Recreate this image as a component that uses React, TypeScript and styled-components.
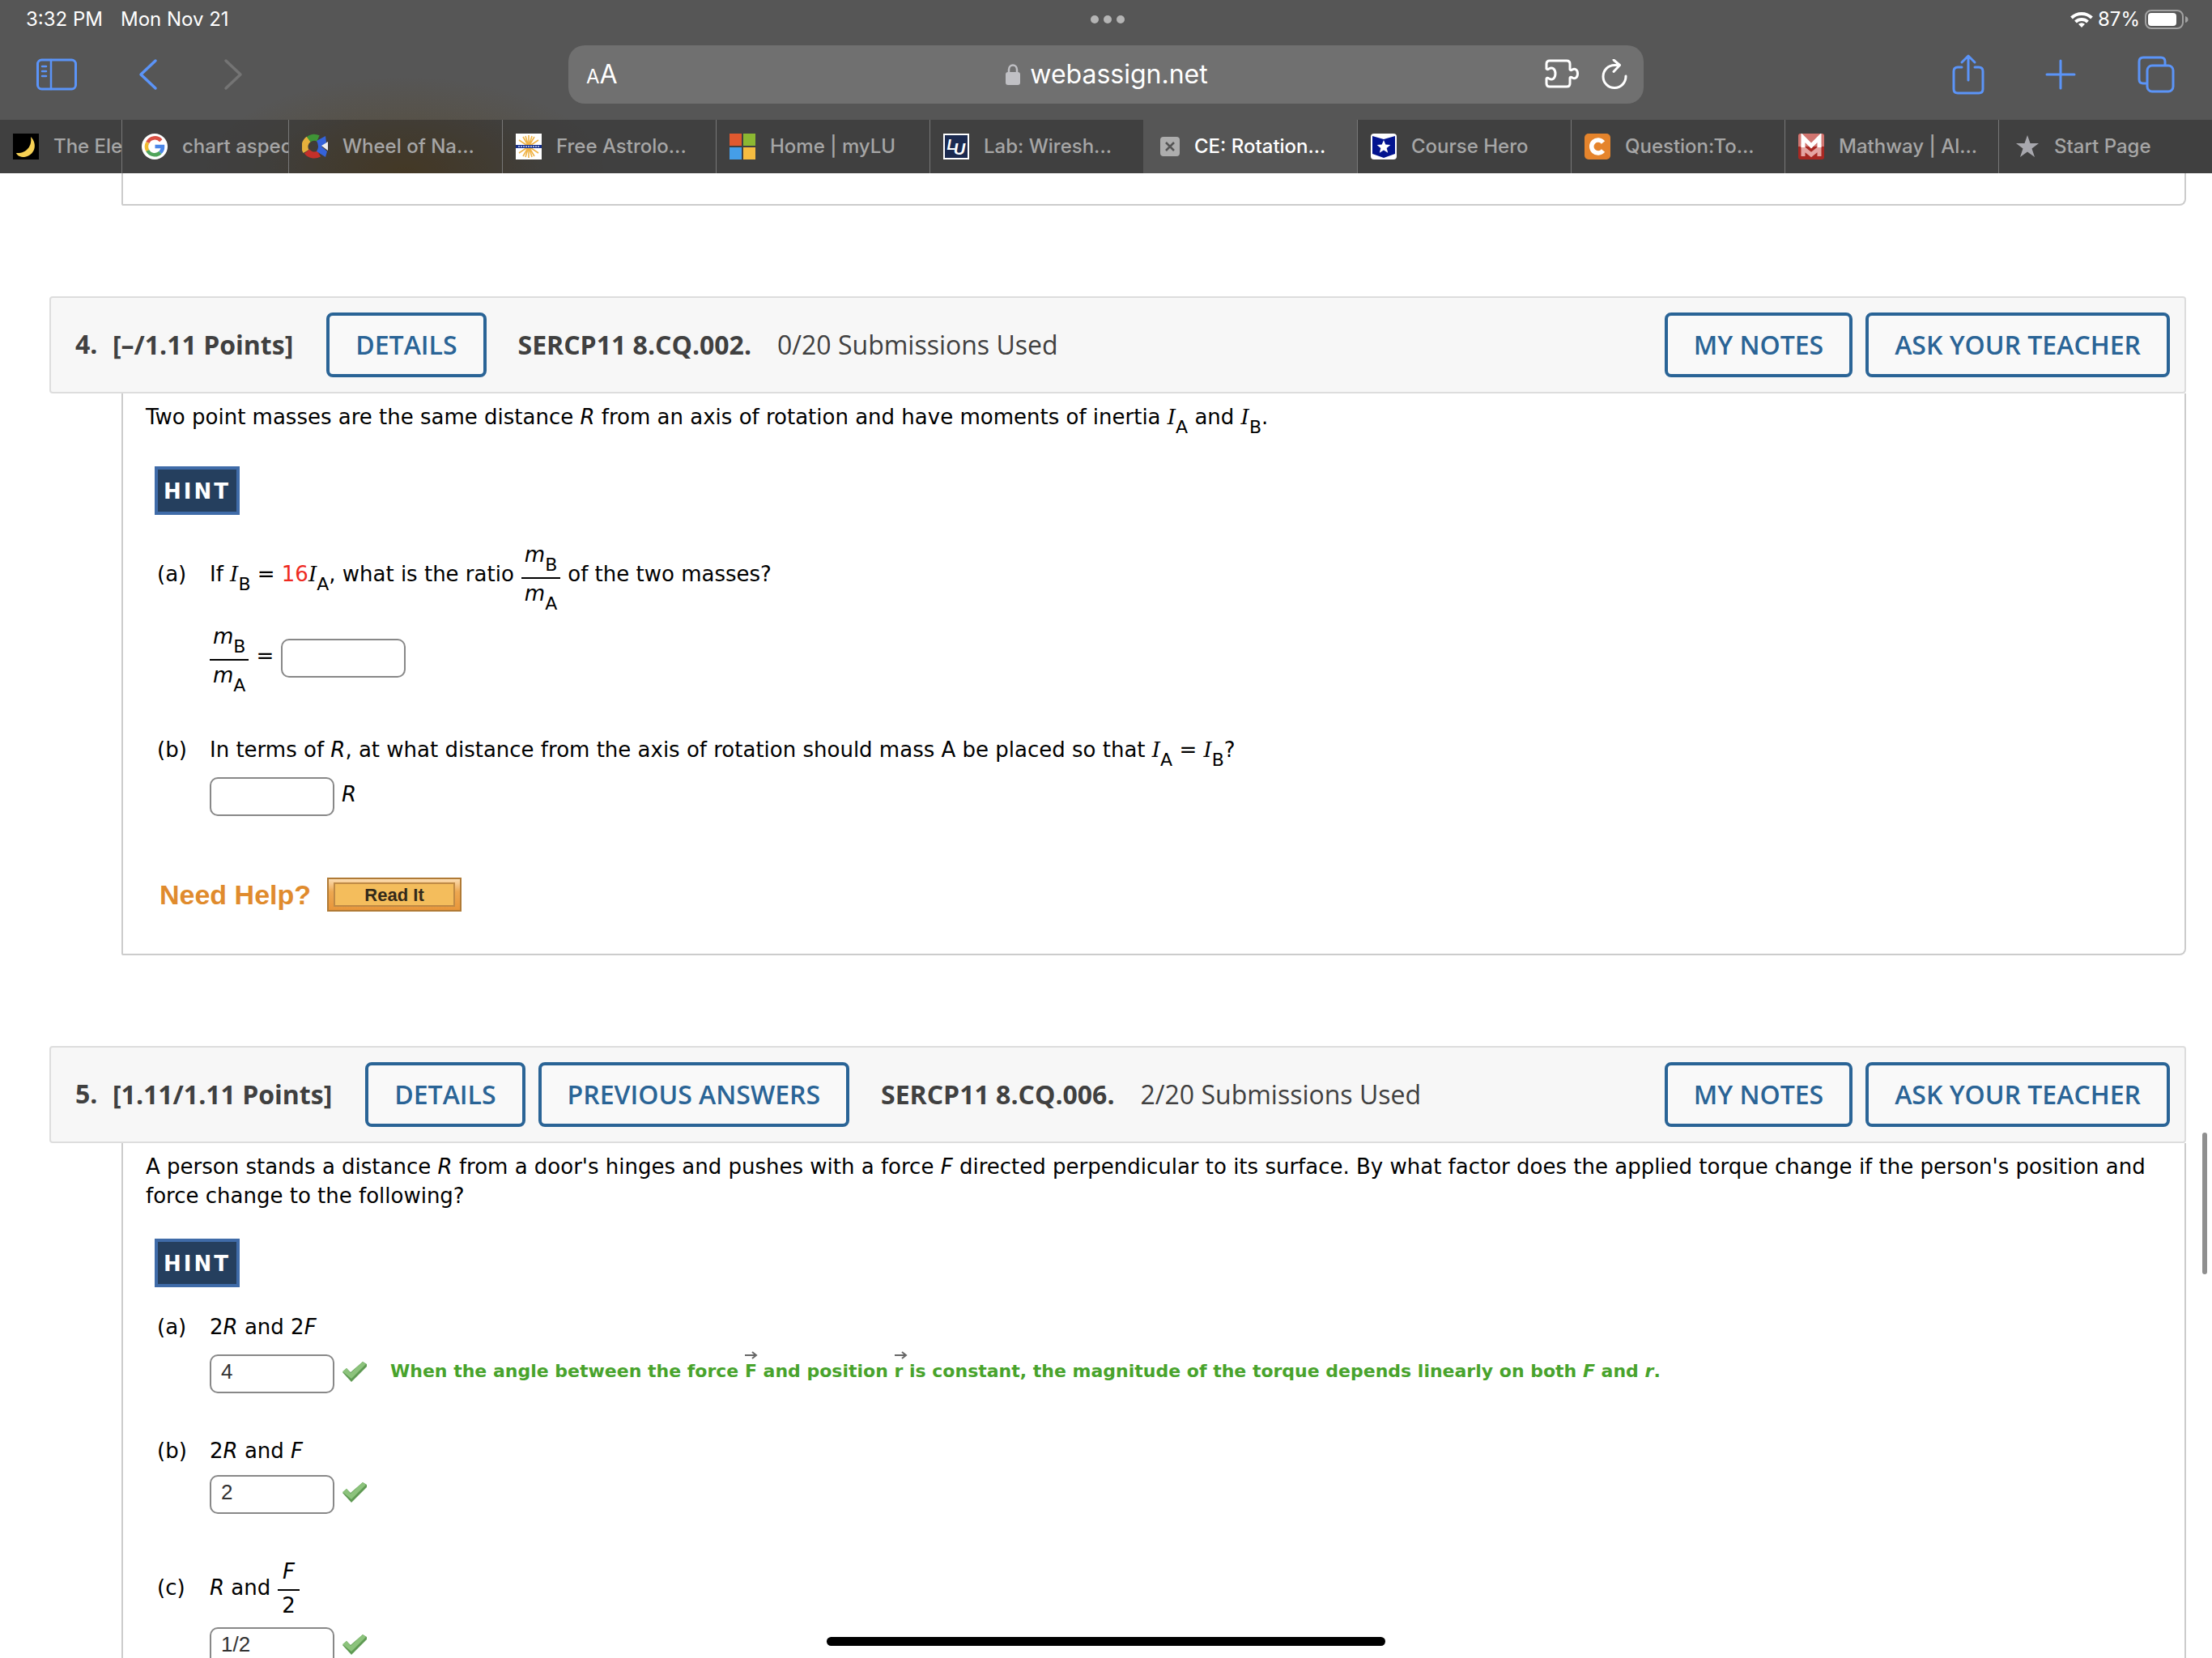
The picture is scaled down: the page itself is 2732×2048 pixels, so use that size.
import React from "react";
import styled, { createGlobalStyle, css } from "styled-components";

const GlobalStyle = createGlobalStyle`
  *, *::before, *::after { box-sizing: border-box; }
  body { margin: 0; background: #fff; }
  button, input { font: inherit; margin: 0; }
`;

const uiFont = css`font-family: Inter, "Liberation Sans", sans-serif;`;
const headFont = css`font-family: "Open Sans", "Noto Sans", sans-serif;`;
const bodyFont = css`font-family: Verdana, "DejaVu Sans", sans-serif;`;

/* ---------- Browser chrome ---------- */

const Screen = styled.div`
  position: relative;
  height: 100vh;
  display: flex;
  flex-direction: column;
  overflow: hidden;
`;

const Chrome = styled.header`
  ${uiFont}
  flex: none;
  color: #fff;
  background:
    radial-gradient(ellipse 250px 120px at 500px 214px, rgba(88, 58, 0, 0.35), rgba(88, 58, 0, 0) 100%),
    #565656;
`;

const StatusBar = styled.div`
  display: grid;
  grid-template-columns: 1fr auto 1fr;
  align-items: center;
  height: 48px;
  padding: 0 29px 0 32px;
  font-size: 24px;
  line-height: 30px;
`;

const Clock = styled.div`
  display: flex;
  gap: 22px;
`;

const Dots = styled.div`
  display: flex;
  gap: 6px;
`;

const Dot = styled.span`
  width: 10px;
  height: 10px;
  border-radius: 50%;
  background: #b4b4b4;
`;

const Power = styled.div`
  display: flex;
  justify-content: flex-end;
  align-items: center;
  gap: 6px;
`;

const Toolbar = styled.div`
  display: grid;
  grid-template-columns: 1fr minmax(0, 1328px) 1fr;
  align-items: center;
  height: 100px;
  padding: 8px 40px 20px;
`;

const ToolGroup = styled.div<{ $end?: boolean }>`
  display: flex;
  align-items: center;
  gap: ${(p) => (p.$end ? "74px" : "60px")};
  padding-right: ${(p) => (p.$end ? "4px" : "0")};
  justify-content: ${(p) => (p.$end ? "flex-end" : "flex-start")};
`;

const IconButton = styled.button<{ $dim?: boolean }>`
  display: flex;
  padding: 0;
  border: 0;
  background: none;
  color: ${(p) => (p.$dim ? "#747474" : "#5b94f8")};
`;

const AddressBar = styled.div`
  display: grid;
  grid-template-columns: 1fr auto 1fr;
  align-items: center;
  height: 72px;
  padding: 0 20px 0 22px;
  border-radius: 20px;
  background: #707070;
`;

const TextSize = styled.button`
  justify-self: start;
  padding: 2px 0 0;
  border: 0;
  background: none;
  color: #fff;
  font-size: 32px;
  line-height: 40px;
`;

const SmallA = styled.span`
  font-size: 24px;
`;

const Address = styled.div`
  display: flex;
  align-items: center;
  gap: 12px;
  font-size: 32px;
  line-height: 40px;
`;

const AddressTools = styled.div`
  display: flex;
  justify-content: flex-end;
  gap: 28px;
  button { color: #fff; }
`;

const TabStrip = styled.nav`
  display: grid;
  grid-template-columns: 150px 206px repeat(9, minmax(0, 1fr));
  height: 66px;
  background: radial-gradient(ellipse 170px 90px at 500px 66px, rgba(100, 62, 0, 0.6), rgba(100, 62, 0, 0) 100%);
`;

const TabItem = styled.a<{ $active?: boolean; $inset?: number }>`
  display: flex;
  align-items: center;
  gap: 18px;
  padding-left: ${(p) => p.$inset ?? 16}px;
  overflow: hidden;
  border-left: 1px solid ${(p) => (p.$active ? "transparent" : "#777")};
  color: ${(p) => (p.$active ? "#fff" : "#a6a6a6")};
  background: ${(p) => (p.$active ? "transparent" : "rgba(48, 48, 48, 0.58)")};
  font-size: 24px;
  font-weight: 500;
  line-height: 30px;
  white-space: nowrap;
  text-decoration: none;
  &:first-child { border-left: 0; }
  svg { flex: none; }
`;

/* ---------- Assignment page ---------- */

const Page = styled.main`
  flex: 1;
  min-height: 0;
  overflow: hidden;
  padding: 0 32px 0 61px;
`;

const Card = styled.div`
  ${bodyFont}
  margin: 0 0 112px 89px;
  padding: 11px 28px 52px;
  border: 2px solid #ccc;
  border-top: 0;
  border-radius: 0 0 8px 2px;
  color: #000;
  font-size: 26px;
  line-height: 36px;
`;

const PreviousCard = styled(Card)`
  height: 40px;
  padding: 0;
`;

const QuestionBar = styled.div`
  ${headFont}
  display: flex;
  align-items: center;
  height: 120px;
  padding: 0 18px 0 30px;
  border: 2px solid #ddd;
  border-radius: 4px;
  background: #f7f7f7;
  color: #404040;
  font-size: 32px;
  line-height: 44px;
  white-space: nowrap;
`;

const QuestionNumber = styled.span`
  width: 46px;
  padding-bottom: 3px;
  font-weight: 700;
`;

const Points = styled.strong`
  font-weight: 700;
  margin-right: 41px;
`;

const Source = styled.strong`
  font-weight: 700;
  margin: 0 32px 0 39px;
`;

const ButtonRow = styled.div<{ $end?: boolean }>`
  display: flex;
  gap: 16px;
  margin-left: ${(p) => (p.$end ? "auto" : "0")};
`;

const OutlineButton = styled.button`
  height: 80px;
  padding: 0 32px;
  border: 4px solid #2a6496;
  border-radius: 8px;
  background: #f9f9f9;
  color: #2a6496;
  font-weight: 600;
`;

const Prompt = styled.p<{ $subscripts?: boolean }>`
  margin: 0;
  padding-bottom: ${(p) => (p.$subscripts ? "8px" : "0")};
`;

const HintButton = styled.button`
  display: block;
  height: 60px;
  margin: 35px 0 31px 11px;
  padding: 2px 7px 0;
  border: 4px solid #3f6ba8;
  background: #253f5e;
  color: #fff;
  font-weight: 700;
  letter-spacing: 3px;
`;

const Parts = styled.div<{ $gap: number }>`
  display: flex;
  flex-direction: column;
  gap: ${(p) => p.$gap}px;
  margin-left: 14px;
`;

const PartGrid = styled.section<{ $gap: number }>`
  display: grid;
  grid-template-columns: 65px 1fr;
  align-items: center;
  row-gap: ${(p) => p.$gap}px;
`;

const Line = styled.div`
  display: flex;
  align-items: center;
  gap: 9px;
`;

const Answer = styled(Line)`
  grid-column: 2;
`;

const Sub = styled.sub`
  font-size: 22px;
  font-style: normal;
  line-height: 0;
  vertical-align: -11px;
`;

const Inertia = styled.i`
  font-family: "DejaVu Serif", serif;
  line-height: 0;
`;

const Given = styled.span`
  color: #ee2a1f;
`;

const Fraction = styled.span`
  display: inline-flex;
  flex-direction: column;
  align-items: stretch;
  text-align: center;
`;

const Numerator = styled.span<{ $tight?: boolean }>`
  padding: 0 ${(p) => (p.$tight ? "5px 4px" : "4px 10px")};
  border-bottom: 2px solid #000;
`;

const Denominator = styled.span<{ $tight?: boolean }>`
  padding: 3px ${(p) => (p.$tight ? "5px 0" : "4px 3px")};
  line-height: 30px;
`;

const AnswerBox = styled.input`
  width: 154px;
  height: 48px;
  margin-top: 6px;
  padding: 0 12px 5px;
  border: 2px solid #888;
  border-radius: 10px;
  background: #fff;
  color: #333;
  font-family: "Liberation Sans", Arial, sans-serif;
  font-size: 26px;
`;

const Feedback = styled.strong`
  margin-left: 20px;
  color: #48a32c;
  font-size: 22px;
  line-height: 36px;
  font-weight: 700;
`;

const VectorMark = styled.span`
  position: relative;
  svg { position: absolute; left: 0; top: -12px; }
`;

const Help = styled.div`
  display: flex;
  align-items: center;
  gap: 20px;
  margin: 76px 0 0 17px;
  font-family: "Liberation Sans", Arial, sans-serif;
`;

const HelpLabel = styled.strong`
  color: #e08b2d;
  font-size: 34px;
  line-height: 36px;
`;

const ReadButton = styled.button`
  width: 166px;
  height: 42px;
  padding: 4px 6px;
  border: 2px solid #b07a35;
  background: linear-gradient(#fbdcb0, #eda852 40%, #e8963a);
  color: #33291a;
  font-size: 22px;
  font-weight: 700;
`;

const ReadFace = styled.span`
  display: block;
  height: 30px;
  padding-top: 1px;
  border: 2px solid #bf8a45;
  background: #f4bd5c;
  line-height: 26px;
`;

const HomeIndicator = styled.div`
  position: absolute;
  left: 50%;
  bottom: 15px;
  width: 690px;
  height: 11px;
  transform: translateX(-50%);
  border-radius: 6px;
  background: #000;
`;

const ScrollThumb = styled.div`
  position: absolute;
  right: 6px;
  top: 1399px;
  width: 6px;
  height: 175px;
  border-radius: 3px;
  background: #8f8f8f;
`;

/* ---------- Drawings ---------- */

const line = { fill: "none", stroke: "currentColor", strokeLinecap: "round" as const, strokeLinejoin: "round" as const };

const SidebarIcon = () => (
  <svg width="60" height="44" viewBox="0 0 60 44" {...line} strokeWidth="3">
    <rect x="6.500" y="4" width="47" height="36" rx="5" />
    <path d="M23 4v36M12 12h5M12 18h5M12 24h5" strokeWidth="2.500" />
  </svg>
);

const BackIcon = ({ flip }: { flip?: boolean }) => (
  <svg width="46" height="44" viewBox="0 0 46 44" {...line} strokeWidth="3.500">
    <path d={flip ? "M13 5l18 17-18 17" : "M32 5L14 22l18 17"} />
  </svg>
);

const LockIcon = () => (
  <svg width="18" height="28" viewBox="0 0 18 28">
    <path d="M4 12V8a5 5.500 0 0 1 10 0v4" fill="none" stroke="#c0c0c4" strokeWidth="2.500" />
    <rect x="0" y="11" width="18" height="16" rx="3" fill="#c0c0c4" />
  </svg>
);

const PuzzleIcon = () => (
  <svg width="42" height="36" viewBox="0 0 42 36" {...line} strokeWidth="3">
    <path d="M2 12V6q0-4 4-4h21q4 0 4 4v7q1 1.500 3 0c3-2 6.500 0 6.500 5s-3.500 7-6.500 5q-2-1.500-3 0v7q0 4-4 4H6q-4 0-4-4v-6q1-1.500 3 0c4 2.500 8 0 8-6s-4-8.500-8-6q-2 1.500-3 0z" />
  </svg>
);

const ReloadIcon = () => (
  <svg width="32" height="38" viewBox="0 0 32 38" {...line} strokeWidth="3">
    <path d="M30 21a14 14 0 1 1-14-13.500h6M15 1l7.500 6.500-7.500 8" />
  </svg>
);

const ShareIcon = () => (
  <svg width="42" height="52" viewBox="0 0 42 52" {...line} strokeWidth="3">
    <path d="M13 17H8q-5 0-5 5v22q0 5 5 5h26q5 0 5-5V22q0-5-5-5h-5M21 33V3M13 11l8-8 8 8" />
  </svg>
);

const PlusIcon = () => (
  <svg width="38" height="38" viewBox="0 0 38 38" {...line} strokeWidth="3">
    <path d="M19 2v34M2 19h34" />
  </svg>
);

const WindowsIcon = () => (
  <svg width="50" height="46" viewBox="0 0 50 46" {...line} strokeWidth="3">
    <rect x="14" y="12" width="32" height="32" rx="6" />
    <path d="M13 34H9q-5 0-5-5V7q0-5 5-5h22q5 0 5 5v4" />
  </svg>
);

const WifiIcon = () => (
  <svg width="28" height="21" viewBox="0 0 28 21" fill="none" stroke="#fff" strokeWidth="4">
    <path d="M1.500 8a18 18 0 0 1 25 0M6.500 13a11 11 0 0 1 15 0" />
    <path d="M14 20l-4-4.200a6 6 0 0 1 8 0z" fill="#fff" stroke="none" />
  </svg>
);

const BatteryIcon = () => (
  <svg width="54" height="24" viewBox="0 0 54 24">
    <rect x="1" y="1" width="46" height="22" rx="7" fill="none" stroke="#a2a2a2" strokeWidth="2" />
    <rect x="4" y="4" width="35" height="16" rx="4" fill="#fff" />
    <path d="M50 8q3.500 1 3.500 4T50 16z" fill="#a2a2a2" />
  </svg>
);

const CheckIcon = () => (
  <svg width="31" height="28" viewBox="0 0 31 28">
    <path d="M1 15l5-5 5 5L26 2l5 3v3L12 27z" fill="#5f9a53" />
    <path d="M1 14l5-4 5 6L26 2l4 3-18 18z" fill="#8cc37c" />
  </svg>
);

const VectorArrow = () => (
  <svg width="16" height="10" viewBox="0 0 16 10" fill="none" stroke="#666" strokeWidth="2">
    <path d="M0 5h14M9 1l5 4-5 4" />
  </svg>
);

const Fav = ({ children }: { children: React.ReactNode }) => (
  <svg width="32" height="32" viewBox="0 0 32 32">{children}</svg>
);

const favText = { textAnchor: "middle" as const, fontFamily: "Liberation Sans, sans-serif", fontWeight: 700 };

const MoonFav = () => (
  <Fav>
    <rect width="32" height="32" fill="#000" />
    <path d="M22 4c9 9 5 23-8 25-5 0-9-2-10-5 12 1 20-8 18-20z" fill="#f7d154" />
  </Fav>
);

const GoogleFav = () => (
  <Fav>
    <circle cx="16" cy="16" r="16" fill="#fff" />
    <g fill="none" strokeWidth="4.500">
      <path d="M23.800 8.700A10 10 0 0 0 7.300 11" stroke="#d94f43" />
      <path d="M7.300 11a10 10 0 0 0 0 10" stroke="#f2bb30" />
      <path d="M7.300 21a10 10 0 0 0 15.700 2.500" stroke="#4fa45a" />
      <path d="M23 23.500A10 10 0 0 0 26 16h-9.500" stroke="#4a86e8" />
    </g>
  </Fav>
);

const WheelFav = () => (
  <Fav>
    <g fill="none" strokeWidth="8">
      <path d="M8 7.500A11.500 11.500 0 0 1 20 6" stroke="#3f9436" />
      <path d="M5 22a11.500 11.500 0 0 1 3-15" stroke="#e6b03c" />
      <path d="M21 25a11.500 11.500 0 0 1-15-3" stroke="#c4302b" />
    </g>
    <path d="M18 9l11-6 1 8-6 5 7 6-2 7-11-7q4-6 0-13z" fill="#3563d9" />
    <path d="M32 10v11l-8-6z" fill="#eee" />
  </Fav>
);

const AstroFav = () => (
  <Fav>
    <rect width="32" height="32" fill="#fff" />
    <path d="M16 2v28M9 4l14 24M23 4L9 28M4 8l24 16M28 8L4 24M12 3l8 26M20 3l-8 26" stroke="#f0b448" strokeWidth="1.600" />
    <rect y="14" width="32" height="4" fill="#16308c" />
    <path d="M3 16h26" stroke="#cdd6ef" strokeWidth="1.500" strokeDasharray="2 1" />
  </Fav>
);

const MicrosoftFav = () => (
  <Fav>
    <rect width="15" height="15" fill="#e0592f" />
    <rect x="17" width="15" height="15" fill="#8cb832" />
    <rect y="17" width="15" height="15" fill="#459ee8" />
    <rect x="17" y="17" width="15" height="15" fill="#f5bc41" />
  </Fav>
);

const LuFav = () => (
  <Fav>
    <rect width="32" height="32" fill="#fff" />
    <rect x="2" y="2" width="28" height="28" fill="#1b2a50" />
    <g {...favText} fontStyle="italic" fill="#fff">
      <text x="10" y="20" fontSize="18">L</text>
      <text x="20" y="26" fontSize="20">U</text>
    </g>
  </Fav>
);

const CloseFav = () => (
  <svg width="24" height="24" viewBox="0 0 24 24">
    <rect width="24" height="24" rx="4" fill="#adadad" />
    <path d="M7 7l10 10M17 7L7 17" stroke="#555" strokeWidth="2.500" />
  </svg>
);

const HeroFav = () => (
  <Fav>
    <rect width="32" height="32" rx="4" fill="#fff" />
    <path d="M2 3l14 4 14-4v22l-14 5-14-5z" fill="#03148f" />
    <path d="M16 8l2.300 5.600 6 .4-4.600 3.900 1.500 5.900-5.200-3.200-5.200 3.200 1.500-5.900L7.700 14l6-.4z" fill="#fff" />
  </Fav>
);

const CheggFav = () => (
  <Fav>
    <rect width="32" height="32" rx="5" fill="#e5842c" />
    <path d="M23 11a8 8 0 1 0 0 10" fill="none" stroke="#fff" strokeWidth="5.500" />
  </Fav>
);

const MathwayFav = () => (
  <Fav>
    <rect width="32" height="32" rx="3" fill="#a82822" />
    <path d="M0 3a3 3 0 0 1 3-3h26a3 3 0 0 1 3 3v13H0z" fill="#d17570" />
    <path d="M6 28V18l10 8 10-8v10" fill="none" stroke="#e4a5a2" strokeWidth="5" />
    <path d="M6 17V5l10 10L26 5v12" fill="none" stroke="#fff" strokeWidth="5" />
  </Fav>
);

const StarFav = () => (
  <svg width="30" height="30" viewBox="0 0 30 30">
    <path d="M15 1l3.500 10H29l-8.500 6.500L24 28l-9-6.500L6 28l3.500-10.500L1 11h10.500z" fill="#a8a8ae" />
  </svg>
);

/* ---------- Content ---------- */

const tabs = [
  { label: "The Ele", icon: <MoonFav /> },
  { label: "chart aspec", icon: <GoogleFav />, inset: 24 },
  { label: "Wheel of Na...", icon: <WheelFav /> },
  { label: "Free Astrolo...", icon: <AstroFav /> },
  { label: "Home | myLU", icon: <MicrosoftFav /> },
  { label: "Lab: Wiresh...", icon: <LuFav /> },
  { label: "CE: Rotation...", icon: <CloseFav />, active: true, inset: 20 },
  { label: "Course Hero", icon: <HeroFav /> },
  { label: "Question:To...", icon: <CheggFav /> },
  { label: "Mathway | Al...", icon: <MathwayFav /> },
  { label: "Start Page", icon: <StarFav />, inset: 20 },
];

const IA = () => <><Inertia>I</Inertia><Sub>A</Sub></>;
const IB = () => <><Inertia>I</Inertia><Sub>B</Sub></>;

const MassRatio = () => (
  <Fraction>
    <Numerator><i>m</i><Sub>B</Sub></Numerator>
    <Denominator><i>m</i><Sub>A</Sub></Denominator>
  </Fraction>
);

const Part = ({ letter, question, gap, children }: {
  letter: string; question: React.ReactNode; gap: number; children: React.ReactNode;
}) => (
  <PartGrid $gap={gap}>
    <span>({letter})</span>
    <Line>{question}</Line>
    <Answer>{children}</Answer>
  </PartGrid>
);

const QuestionHeader = ({ number, points, source, used, previous }: {
  number: string; points: string; source: string; used: string; previous?: boolean;
}) => (
  <QuestionBar>
    <QuestionNumber>{number}</QuestionNumber>
    <Points>{points}</Points>
    <ButtonRow>
      <OutlineButton>DETAILS</OutlineButton>
      {previous && <OutlineButton>PREVIOUS ANSWERS</OutlineButton>}
    </ButtonRow>
    <Source>{source}</Source>
    <span>{used}</span>
    <ButtonRow $end>
      <OutlineButton>MY NOTES</OutlineButton>
      <OutlineButton>ASK YOUR TEACHER</OutlineButton>
    </ButtonRow>
  </QuestionBar>
);

export default function App() {
  return (
    <Screen>
      <GlobalStyle />
      <Chrome>
        <StatusBar>
          <Clock><span>3:32 PM</span><span>Mon Nov 21</span></Clock>
          <Dots><Dot /><Dot /><Dot /></Dots>
          <Power><WifiIcon /><span>87%</span><BatteryIcon /></Power>
        </StatusBar>
        <Toolbar>
          <ToolGroup>
            <IconButton aria-label="Sidebar"><SidebarIcon /></IconButton>
            <IconButton aria-label="Back"><BackIcon /></IconButton>
            <IconButton aria-label="Forward" $dim><BackIcon flip /></IconButton>
          </ToolGroup>
          <AddressBar>
            <TextSize aria-label="Text size"><SmallA>A</SmallA>A</TextSize>
            <Address><LockIcon /><span>webassign.net</span></Address>
            <AddressTools>
              <IconButton aria-label="Extensions"><PuzzleIcon /></IconButton>
              <IconButton aria-label="Reload"><ReloadIcon /></IconButton>
            </AddressTools>
          </AddressBar>
          <ToolGroup $end>
            <IconButton aria-label="Share"><ShareIcon /></IconButton>
            <IconButton aria-label="New tab"><PlusIcon /></IconButton>
            <IconButton aria-label="All tabs"><WindowsIcon /></IconButton>
          </ToolGroup>
        </Toolbar>
        <TabStrip>
          {tabs.map((t) => (
            <TabItem key={t.label} href="#" $active={t.active} $inset={t.inset}>
              {t.icon}<span>{t.label}</span>
            </TabItem>
          ))}
        </TabStrip>
      </Chrome>

      <Page>
        <PreviousCard />

        <QuestionHeader number="4." points="[–/1.11 Points]" source="SERCP11 8.CQ.002." used="0/20 Submissions Used" />
        <Card>
          <Prompt $subscripts>
            Two point masses are the same distance <i>R</i> from an axis of rotation and have moments of inertia <IA /> and <IB />.
          </Prompt>
          <HintButton>HINT</HintButton>
          <Parts $gap={56}>
            <Part
              letter="a"
              gap={17}
              question={<>
                <span>If <IB /> = <Given>16</Given><IA />, what is the ratio</span>
                <MassRatio />
                <span>of the two masses?</span>
              </>}
            >
              <MassRatio />
              <span>=</span>
              <AnswerBox aria-label="Ratio of the two masses" />
            </Part>
            <Part
              letter="b"
              gap={10}
              question={<span>In terms of <i>R</i>, at what distance from the axis of rotation should mass A be placed so that <IA /> = <IB />?</span>}
            >
              <AnswerBox aria-label="Distance in terms of R" />
              <i>R</i>
            </Part>
          </Parts>
          <Help>
            <HelpLabel>Need Help?</HelpLabel>
            <ReadButton><ReadFace>Read It</ReadFace></ReadButton>
          </Help>
        </Card>

        <QuestionHeader number="5." points="[1.11/1.11 Points]" source="SERCP11 8.CQ.006." used="2/20 Submissions Used" previous />
        <Card>
          <Prompt>
            A person stands a distance <i>R</i> from a door's hinges and pushes with a force <i>F</i> directed perpendicular to its surface. By what factor does the applied torque change if the person's position and force change to the following?
          </Prompt>
          <HintButton>HINT</HintButton>
          <Parts $gap={53}>
            <Part letter="a" gap={10} question={<span>2<i>R</i> and 2<i>F</i></span>}>
              <AnswerBox aria-label="Answer a" defaultValue="4" />
              <CheckIcon />
              <Feedback>
                When the angle between the force <VectorMark>F<VectorArrow /></VectorMark> and position <VectorMark>r<VectorArrow /></VectorMark> is constant, the magnitude of the torque depends linearly on both <i>F</i> and <i>r</i>.
              </Feedback>
            </Part>
            <Part letter="b" gap={6} question={<span>2<i>R</i> and <i>F</i></span>}>
              <AnswerBox aria-label="Answer b" defaultValue="2" />
              <CheckIcon />
            </Part>
            <Part
              letter="c"
              gap={6}
              question={<>
                <span><i>R</i> and</span>
                <Fraction>
                  <Numerator $tight><i>F</i></Numerator>
                  <Denominator $tight>2</Denominator>
                </Fraction>
              </>}
            >
              <AnswerBox aria-label="Answer c" defaultValue="1/2" />
              <CheckIcon />
            </Part>
          </Parts>
        </Card>
      </Page>
      <ScrollThumb />
      <HomeIndicator />
    </Screen>
  );
}
